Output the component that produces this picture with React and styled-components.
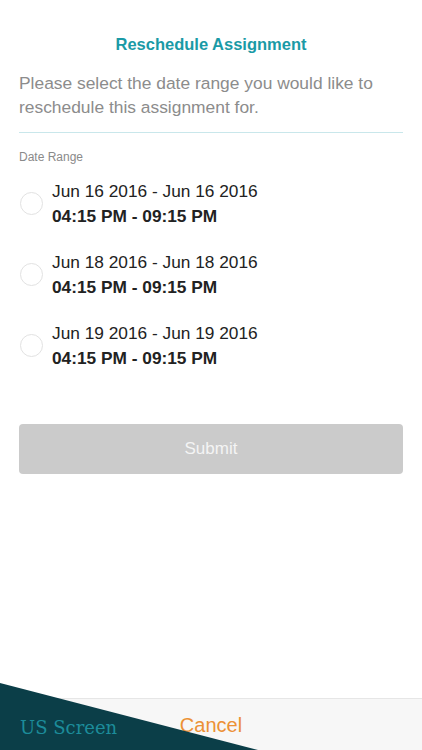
import styled, { createGlobalStyle } from 'styled-components';

const GlobalStyle = createGlobalStyle`
    html, body {
        margin: 0;
        padding: 0;
        background: #fff;
        font-family: "Liberation Sans", Arial, sans-serif;
    }
    #root {
        height: 750px;
    }
`;

const Screen = styled('div')`
    position: relative;
    height: 750px;
    display: flex;
    flex-direction: column;
    overflow: hidden;
`;

const Content = styled('div')`
    flex: 1;
    padding: 0 19px;
`;

const Title = styled('h1')`
    margin: 0;
    padding-top: 34px;
    text-align: center;
    font-size: 16.5px;
    font-weight: 700;
    color: #1a9aa6;
    line-height: 20px;
`;

const Intro = styled('p')`
    margin: 17px 0 0;
    font-size: 17.4px;
    line-height: 24px;
    color: #8c8c8c;
`;

const Divider = styled('div')`
    height: 1px;
    background: #c9e7eb;
    margin-top: 13px;
`;

const Label = styled('div')`
    margin-top: 17px;
    font-size: 12px;
    color: #8a8a8a;
`;

const OptionList = styled('div')`
    display: flex;
    flex-direction: column;
    gap: 24px;
    margin-top: 16px;
`;

const Option = styled('label')`
    display: flex;
    align-items: center;
    gap: 9px;
`;

const Radio = styled('span')`
    width: 21px;
    height: 21px;
    border-radius: 50%;
    border: 1px solid #e2e2e2;
    flex-shrink: 0;
    margin-left: 1px;
`;

const OptionText = styled('div')`
    display: flex;
    flex-direction: column;
    gap: 3px;
    color: #222;
    font-size: 17.3px;
    line-height: 22px;
`;

const Time = styled('span')`
    font-weight: 700;
`;

const SubmitButton = styled('button')`
    display: block;
    width: 100%;
    height: 50px;
    margin-top: 55px;
    border: none;
    border-radius: 4px;
    background: #cbcbcb;
    color: #f4f4f4;
    font-family: inherit;
    font-size: 17px;
`;

const BottomBar = styled('div')`
    height: 51px;
    border-top: 1px solid #e6e6e6;
    background: #f7f7f7;
    display: flex;
    align-items: center;
    justify-content: center;
`;

const CancelButton = styled('button')`
    border: none;
    background: none;
    font-family: inherit;
    font-size: 20px;
    color: #ec9135;
    padding: 0;
    margin-top: 2px;
`;

const Watermark = styled('div')`
    position: absolute;
    left: 0;
    bottom: 0;
    width: 258px;
    height: 67px;
    background: #0b3e48;
    clip-path: polygon(0 0, 100% 100%, 0 100%);
    pointer-events: none;
`;

const WatermarkText = styled('span')`
    position: absolute;
    left: 20px;
    bottom: 12px;
    font-family: "DejaVu Serif", "Liberation Serif", serif;
    font-size: 18px;
    color: #1c8c9a;
    pointer-events: none;
`;

const options = [
    { date: 'Jun 16 2016 - Jun 16 2016', time: '04:15 PM - 09:15 PM' },
    { date: 'Jun 18 2016 - Jun 18 2016', time: '04:15 PM - 09:15 PM' },
    { date: 'Jun 19 2016 - Jun 19 2016', time: '04:15 PM - 09:15 PM' },
];

export default function App() {
    return (
        <Screen>
            <GlobalStyle />
            <Content>
                <Title>Reschedule Assignment</Title>
                <Intro>Please select the date range you would like to reschedule this assignment for.</Intro>
                <Divider />
                <Label>Date Range</Label>
                <OptionList>
                    {options.map((o) => (
                        <Option key={o.date}>
                            <Radio />
                            <OptionText>
                                <span>{o.date}</span>
                                <Time>{o.time}</Time>
                            </OptionText>
                        </Option>
                    ))}
                </OptionList>
                <SubmitButton>Submit</SubmitButton>
            </Content>
            <BottomBar>
                <CancelButton>Cancel</CancelButton>
            </BottomBar>
            <Watermark />
            <WatermarkText>US Screen</WatermarkText>
        </Screen>
    );
}
